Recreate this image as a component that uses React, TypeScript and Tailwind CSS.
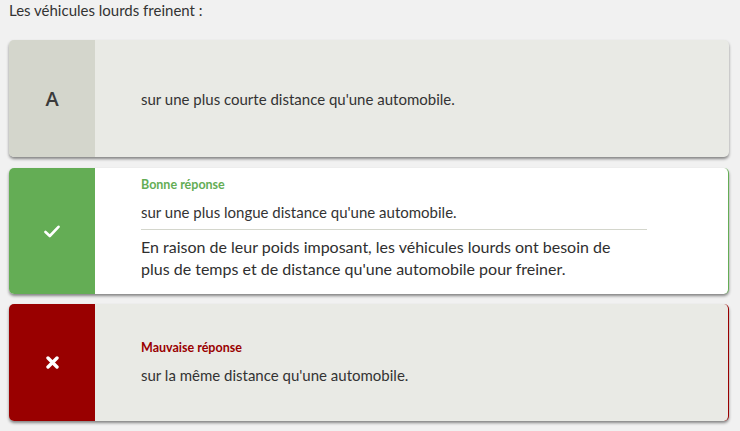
import React from 'react';

const Check = () => (
  <svg width="16" height="13" viewBox="0 0 16 13" fill="none">
    <path d="M1.5 7 L5.8 11 L14.5 1.8" stroke="#fff" strokeWidth="2.6" strokeLinecap="round" strokeLinejoin="round" />
  </svg>
);

const Cross = () => (
  <svg width="13" height="13" viewBox="0 0 13 13" fill="none">
    <path d="M2 2 L11 11 M11 2 L2 11" stroke="#fff" strokeWidth="3.4" strokeLinecap="round" />
  </svg>
);

const App: React.FC = () => {
  return (
    <div className="min-h-[431px] bg-[#f1f1f1] pl-[9px] pr-[11px] font-['Lato',sans-serif] text-[#333]">
      <p className="text-[15px] leading-[20px] pt-0">Les véhicules lourds freinent :</p>

      <div className="mt-[20px] flex flex-col gap-[11px]">
        {/* A */}
        <div className="flex h-[117px] rounded-[5px] overflow-hidden shadow-[0_2px_3px_rgba(0,0,0,0.45)] bg-[#e9eae5]">
          <div className="w-[86px] shrink-0 bg-[#d4d6cc] flex items-center justify-center">
            <span className="font-['Open_Sans',sans-serif] font-semibold text-[20px] text-[#3b3b3b]">A</span>
          </div>
          <div className="flex items-center pl-[46px]">
            <span className="text-[15px] leading-[20px]">sur une plus courte distance qu'une automobile.</span>
          </div>
        </div>

        {/* Bonne réponse */}
        <div className="flex h-[126px] rounded-[5px] overflow-hidden shadow-[0_2px_3px_rgba(0,0,0,0.45)] bg-white border-r border-[#64ad55]">
          <div className="w-[86px] shrink-0 bg-[#64ad55] flex items-center justify-center">
            <Check />
          </div>
          <div className="pl-[46px] pt-[10px] w-[552px]">
            <div className="text-[12.5px] leading-[14px] font-bold text-[#64ad55]">Bonne réponse</div>
            <div className="mt-[10px] text-[15px] leading-[20px] pb-[7px] border-b border-[#d4d6cc]">sur une plus longue distance qu'une automobile.</div>
            <div className="mt-[6px] w-[492px] text-[16px] leading-[22px] text-[#2f2f2f]">
              En raison de leur poids imposant, les véhicules lourds ont besoin de plus de temps et de distance qu'une automobile pour freiner.
            </div>
          </div>
        </div>

        {/* Mauvaise réponse */}
        <div className="flex h-[117px] rounded-[5px] overflow-hidden shadow-[0_2px_3px_rgba(0,0,0,0.45)] bg-[#e9eae5] border-r border-[#990000] -mt-[1px]">
          <div className="w-[86px] shrink-0 bg-[#990000] flex items-center justify-center">
            <Cross />
          </div>
          <div className="pl-[46px] flex flex-col justify-center">
            <div className="text-[12.5px] leading-[14px] font-bold text-[#990000]">Mauvaise réponse</div>
            <div className="mt-[10px] text-[15px] leading-[20px]">sur la même distance qu'une automobile.</div>
          </div>
        </div>
      </div>
    </div>
  );
};

export default App;
